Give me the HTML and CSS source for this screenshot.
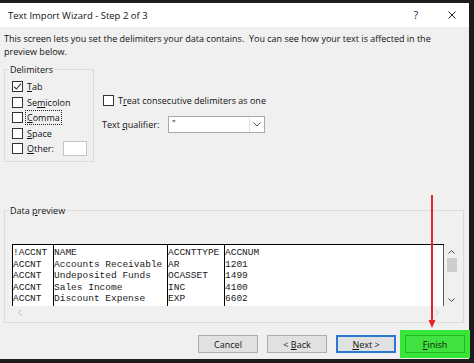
FILE: index.html
```html
<!DOCTYPE html>
<html>
<head>
<meta charset="utf-8">
<link rel="stylesheet" href="styles.css">
</head>
<body>
<div class="topbar"></div>
<div class="window">
  <div class="titlebar">
    <span class="title">Text Import Wizard - Step 2 of 3</span>
    <span class="help">?</span>
    <svg class="close" width="8" height="8" viewBox="0 0 8 8"><path d="M0.5 0.5L7.5 7.5M7.5 0.5L0.5 7.5" stroke="#222" stroke-width="1" fill="none"/></svg>
  </div>
  <p class="desc">This screen lets you set the delimiters your data contains.&nbsp; You can see how your text is affected in the<br>preview below.</p>
  <div class="options">
    <fieldset class="group delims">
      <legend>Delimiters</legend>
      <div class="cb-row"><span class="box checked"><svg width="9" height="9" viewBox="0 0 9 9"><path d="M1 4.6L3.4 7L8 1.6" stroke="#333" stroke-width="1.1" fill="none"/></svg></span><span><u>T</u>ab</span></div>
      <div class="cb-row"><span class="box"></span><span>Se<u>m</u>icolon</span></div>
      <div class="cb-row"><span class="box"></span><span class="focus"><u>C</u>omma</span></div>
      <div class="cb-row"><span class="box"></span><span><u>S</u>pace</span></div>
      <div class="cb-row"><span class="box"></span><span><u>O</u>ther:</span><span class="other-input"></span></div>
    </fieldset>
    <div class="extra">
      <div class="cb-row treat"><span class="box"></span><span>T<u>r</u>eat consecutive delimiters as one</span></div>
      <div class="qual-row">
        <span class="qual-label">Text <u>q</u>ualifier:</span>
        <div class="combo">
          <span class="combo-val">"</span>
          <span class="combo-btn"><svg width="8" height="5" viewBox="0 0 8 5"><path d="M0.5 0.5L4 4L7.5 0.5" stroke="#555" stroke-width="1" fill="none"/></svg></span>
        </div>
      </div>
    </div>
  </div>
  <fieldset class="group preview">
    <legend>Data <u>p</u>review</legend>
    <div class="pv-top">
      <div class="table">
        <div class="col c1">!ACCNT
ACCNT
ACCNT
ACCNT
ACCNT</div>
        <div class="col c2">NAME
Accounts Receivable
Undeposited Funds
Sales Income
Discount Expense</div>
        <div class="col c3">ACCNTTYPE
AR
OCASSET
INC
EXP</div>
        <div class="col c4">ACCNUM
1201
1499
4100
6602</div>
      </div>
      <div class="vscroll">
        <svg class="chev-up" width="7" height="4" viewBox="0 0 7 4"><path d="M0.5 3.5L3.5 0.5L6.5 3.5" stroke="#444" stroke-width="1" fill="none"/></svg>
        <div class="thumb"></div>
        <svg class="chev-down" width="7" height="4" viewBox="0 0 7 4"><path d="M0.5 0.5L3.5 3.5L6.5 0.5" stroke="#444" stroke-width="1" fill="none"/></svg>
      </div>
    </div>
    <div class="hscroll">
      <svg width="4" height="7" viewBox="0 0 4 7"><path d="M3.5 0.5L0.5 3.5L3.5 6.5" stroke="#bdbdbd" stroke-width="1" fill="none"/></svg>
      <svg width="4" height="7" viewBox="0 0 4 7"><path d="M0.5 0.5L3.5 3.5L0.5 6.5" stroke="#d0d0d0" stroke-width="1" fill="none"/></svg>
    </div>
  </fieldset>
  <div class="buttons">
    <button class="btn">Cancel</button>
    <button class="btn">&lt; <u>B</u>ack</button>
    <button class="btn default"><u>N</u>ext &gt;</button>
    <button class="btn finish"><u>F</u>inish</button>
  </div>
  <svg class="arrow" width="12" height="140" viewBox="0 0 12 140"><path d="M6 3V130" stroke="#e3242b" stroke-width="2"/><polygon points="2.5,128 9.5,128 6,136" fill="#e3242b"/></svg>
</div>
<div class="bottombar"></div>
</body>
</html>
```
FILE: styles.css
```css
* { box-sizing: border-box; }
html, body { margin: 0; padding: 0; }
body {
  width: 474px;
  height: 363px;
  overflow: hidden;
  background: #1c1c1c;
  font-family: "Open Sans", "Noto Sans", sans-serif;
  font-size: 9px;
  color: #111;
}
.topbar { height: 3px; background: #1e1e1e; }
.window {
  position: relative;
  width: 469px;
  height: 356px;
  background: #f0f0f0;
}
.titlebar {
  height: 24px;
  background: #fff;
  display: flex;
  align-items: center;
  padding-left: 8px;
  font-size: 9.5px;
}
.title { flex: 1; }
.help { margin-right: 30px; font-size: 10px; }
.close { margin-right: 13px; }
.desc {
  margin: 0;
  padding: 5px 0 0 4px;
  line-height: 13px;
}
.options { display: flex; margin-top: 5px; }
.group {
  margin: 0;
  border: 1px solid #dcdcdc;
  min-width: 0;
}
.group legend {
  padding: 0 1px;
  margin-left: -3px;
  line-height: 13px;
}
.delims {
  margin-left: 4px;
  width: 90px;
  padding: 3px 0 4.5px 7px;
}
.cb-row {
  display: flex;
  align-items: center;
  height: 15.5px;
}
.box {
  width: 11px;
  height: 11px;
  border: 1px solid #333;
  background: #fff;
  margin-right: 4px;
  flex: none;
  display: flex;
  align-items: center;
  justify-content: center;
}
.focus { outline: 1px dotted #222; outline-offset: 0; padding: 0 1px; margin-left: -1px; }
.other-input {
  margin-left: auto;
  margin-right: 6px;
  width: 24px;
  height: 15px;
  border: 1px solid #c4c4c4;
  background: #fff;
}
.extra {
  margin-left: 9px;
  padding-top: 31px;
  display: flex;
  flex-direction: column;
}
.treat { height: 12px; }
.qual-row {
  display: flex;
  align-items: center;
  margin-top: 10px;
  margin-left: -1px;
  height: 17px;
}
.qual-label { width: 66px; }
.combo {
  width: 97px;
  height: 17px;
  border: 1px solid #a9a9a9;
  background: #fff;
  display: flex;
}
.combo-val { flex: 1; padding-left: 3px; line-height: 13px; }
.combo-btn {
  width: 15px;
  border-left: 1px solid #e3e3e3;
  display: flex;
  align-items: center;
  justify-content: center;
}
.preview {
  margin: 41.5px 0 0 4px;
  width: 460px;
  padding: 27.5px 5px 4px 7px;
}
.pv-top { display: flex; height: 62px; }
.table {
  display: flex;
  width: 432px;
  height: 62px;
  background: #fff;
  border-top: 1px solid #000;
  overflow: hidden;
  font-family: "Liberation Mono", "Courier New", monospace;
  font-size: 9.5px;
  line-height: 11.6px;
  color: #1a1a1a;
}
.col {
  border-left: 1px solid #000;
  padding-top: 2px;
  white-space: pre;
  overflow: hidden;
  flex: none;
}
.c1 { width: 41px; }
.c2 { width: 114px; }
.c3 { width: 57px; }
.c4 { flex: 1; border-right: 1px solid #555; }
.vscroll {
  width: 14px;
  display: flex;
  flex-direction: column;
  align-items: center;
  padding: 6px 0 4px;
}
.thumb {
  width: 10px;
  height: 14px;
  background: #cdcdcd;
  margin-top: 4px;
  margin-left: 1px;
}
.chev-down { margin-top: auto; }
.hscroll {
  width: 432px;
  height: 12px;
  display: flex;
  align-items: center;
  justify-content: space-between;
  padding: 0 5px 0 6px;
}
.buttons {
  display: flex;
  justify-content: flex-end;
  gap: 9px;
  padding-right: 4px;
  margin-top: 12px;
}
.btn {
  width: 60px;
  height: 18px;
  margin: 0;
  padding: 0;
  background: #e1e1e1;
  border: 1px solid #adadad;
  font-family: "Open Sans", "Noto Sans", sans-serif;
  font-size: 9px;
  color: #111;
}
.default { border: 2px solid #2a7bd0; }
.finish {
  background: #3fe23f;
  border: 1px solid #27b527;
  box-shadow: 0 0 0 5px #37e637;
}
.arrow { position: absolute; left: 426px; top: 189px; }
.bottombar { height: 4px; background: #1c1c1c; }
```
